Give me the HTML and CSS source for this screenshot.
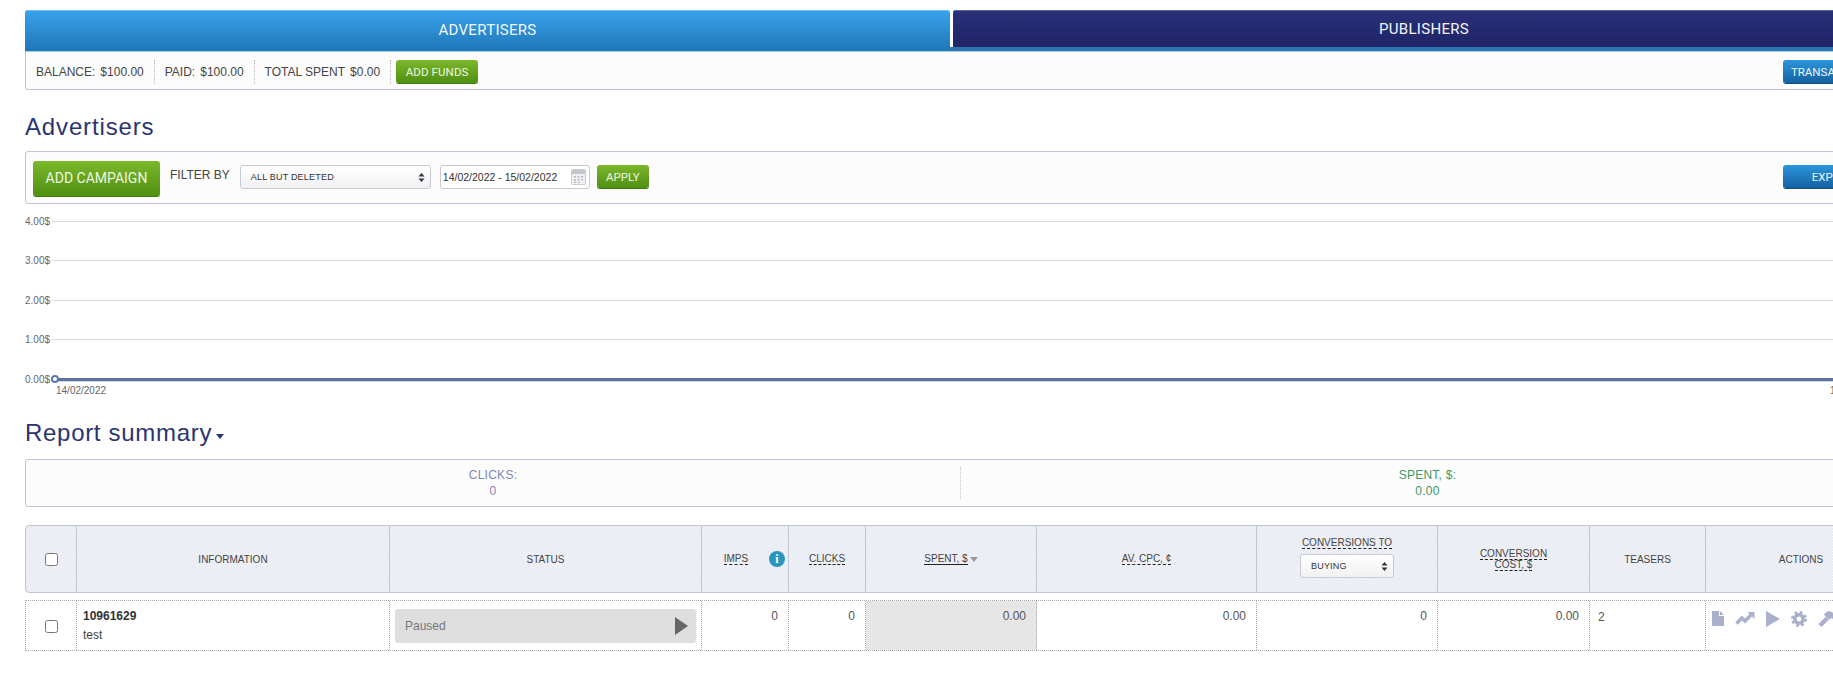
FILE: index.html
```html
<!DOCTYPE html>
<html lang="en">
<head>
<meta charset="utf-8">
<title>Advertisers</title>
<link rel="stylesheet" href="styles.css">
</head>
<body>
<div class="page">
  <nav class="tabs">
    <a class="tab tab-adv">ADVERTISERS</a>
    <a class="tab tab-pub">PUBLISHERS</a>
  </nav>
  <div class="box balance-bar">
    <span class="stat">BALANCE: <i>$100.00</i></span>
    <span class="stat">PAID: <i>$100.00</i></span>
    <span class="stat">TOTAL SPENT <i>$0.00</i></span>
    <button class="btn btn-green btn-small">ADD FUNDS</button>
    <button class="btn btn-blue btn-right">TRANSACTIONS</button>
  </div>

  <h1 class="title">Advertisers</h1>
  <div class="box filter-bar">
    <button class="btn btn-green btn-large">ADD CAMPAIGN</button>
    <span class="filter-label">FILTER BY</span>
    <div class="select select-filter">
      <span>ALL BUT DELETED</span>
      <svg class="updown" width="7" height="11" viewBox="0 0 7 11"><path d="M3.5 1 6.5 4.500H.5zM3.500 10 .5 6.500h6z"/></svg>
    </div>
    <div class="date">
      <span>14/02/2022 - 15/02/2022</span>
      <svg width="15" height="17" viewBox="0 0 15 17"><rect x=".5" y="1.500" width="14" height="15" rx="1" fill="#eef0f2" stroke="#c9ccd2"/><rect x="1" y="2" width="13" height="4" fill="#c4c7cd"/><path d="M3 8h2v1.500H3zm3.500 0h2v1.500h-2zm3.500 0h2v1.500h-2zM3 11h2v1.500H3zm3.500 0h2v1.500h-2zm3.500 0h2v1.500h-2zM3 13.800h2v1.200H3zm3.500 0h2v1.200h-2z" fill="#b4b8c0"/></svg>
    </div>
    <button class="btn btn-green btn-apply">APPLY</button>
    <button class="btn btn-blue btn-right btn-export">EXPORT</button>
  </div>

  <svg class="chart" width="1870" height="215" viewBox="0 0 1870 215">
    <g class="grid">
      <path d="M27 17.500H1870M27 56.500H1870M27 96.500H1870M27 135.500H1870"/>
    </g>
    <g class="axis">
      <text x="0" y="21">4.00$</text>
      <text x="0" y="60">3.00$</text>
      <text x="0" y="100">2.00$</text>
      <text x="0" y="139">1.00$</text>
      <text x="0" y="179">0.00$</text>
      <text x="31" y="190">14/02/2022</text>
      <text x="1805" y="190">15/02/2022</text>
    </g>
    <path class="line-shadow" d="M30 177H1870"/>
    <path class="line" d="M30 175.500H1870"/>
    <circle class="dot" cx="30" cy="175" r="3"/>
  </svg>

  <h2 class="title title-report">Report summary<span class="caret"></span></h2>
  <div class="box summary">
    <div class="summary-cell clicks">CLICKS:<br>0</div>
    <div class="summary-cell spent">SPENT, $:<br>0.00</div>
  </div>

  <div class="t-row t-head">
    <div class="th"><input type="checkbox"></div>
    <div class="th">INFORMATION</div>
    <div class="th">STATUS</div>
    <div class="th th-imps"><u class="dash">IMPS</u><span class="info">i</span></div>
    <div class="th"><u class="dash">CLICKS</u></div>
    <div class="th"><u class="solid">SPENT, $</u><span class="sort"></span></div>
    <div class="th"><u class="dash">AV. CPC, ¢</u></div>
    <div class="th th-conv">
      <u class="dash">CONVERSIONS TO</u>
      <div class="select select-conv">
        <span>BUYING</span>
        <svg class="updown" width="7" height="11" viewBox="0 0 7 11"><path d="M3.5 1 6.5 4.500H.5zM3.500 10 .5 6.500h6z"/></svg>
      </div>
    </div>
    <div class="th th-cost"><u class="dash">CONVERSION</u><u class="dash">COST, $</u></div>
    <div class="th">TEASERS</div>
    <div class="th">ACTIONS</div>
  </div>

  <div class="t-row t-body">
    <div class="td td-check"><input type="checkbox"></div>
    <div class="td td-info"><b>10961629</b><span>test</span></div>
    <div class="td td-status">
      <div class="status-pill"><span>Paused</span><svg width="13" height="18" viewBox="0 0 13 18"><path d="M0 0 13 9 0 18z"/></svg></div>
    </div>
    <div class="td num">0</div>
    <div class="td num">0</div>
    <div class="td num sorted">0.00</div>
    <div class="td num">0.00</div>
    <div class="td num">0</div>
    <div class="td num">0.00</div>
    <div class="td td-teasers">2</div>
    <div class="td td-actions">
      <svg width="12" height="15" viewBox="0 0 12 15"><path d="M0 0H7V5H12V15H0zM8 0 12 4H8z"/></svg>
      <svg width="20" height="14" viewBox="0 0 20 14"><path class="trend" d="M1.500 12.500 7 7l3 3 6-6"/><path d="M12.500 1H19.500V8z"/></svg>
      <svg width="14" height="16" viewBox="0 0 14 16"><path d="M0 0 14 8 0 16z"/></svg>
      <svg width="16" height="16" viewBox="0 0 16 16"><circle class="gear-ring" cx="8" cy="8" r="4.200"/><circle class="gear-teeth" cx="8" cy="8" r="6.500"/></svg>
      <svg width="18" height="16" viewBox="0 0 18 16"><path d="M.5 13l7-7 3 3-7 7zM6 3 10 0l4 1 4 4-3 3-2-1-2 2-4-4z"/></svg>
    </div>
  </div>
</div>
</body>
</html>
```
FILE: styles.css
```css
html, body { overflow-x: hidden; }
body {
  margin: 0;
  padding: 10px 0 0 25px;
  font-family: "Liberation Sans", Arial, sans-serif;
  font-size: 12px;
  color: #333;
  background: #fff;
}
.page { width: 1870px; }

/* tabs */
.tabs {
  display: flex;
  gap: 3px;
  height: 41px;
  border-bottom: 1px solid #9fd3ec;
  background: linear-gradient(to bottom, #fff 37px, #2e72ae 37px);
}
.tab {
  display: flex;
  align-items: center;
  justify-content: center;
  font-family: Roboto, sans-serif;
  font-size: 15px;
  letter-spacing: .3px;
  color: #f2f6fb;
  border-radius: 3px 3px 0 0;
}
.tab-adv {
  width: 925px;
  padding-bottom: 2px;
  box-sizing: border-box;
  background: linear-gradient(to bottom, #38a3ec, #2076b6);
  box-shadow: inset 0 1px 0 #6fc0f0;
}
.tab-pub {
  flex: 1;
  height: 37px;
  background: linear-gradient(to bottom, #2a3079, #1f2466);
  box-shadow: inset 0 1px 0 #5a62a0;
}

/* boxes */
.box {
  box-sizing: border-box;
  border: 1px solid #bfc5d4;
  border-radius: 3px;
  background: #fcfcfd;
}
.balance-bar {
  display: flex;
  align-items: center;
  height: 38px;
  padding: 2px 11px 0 10px;
  border-top: 0;
  border-radius: 0 0 3px 3px;
}
.stat {
  display: flex;
  align-items: center;
  gap: 5px;
  height: 24px;
  padding-right: 10px;
  margin-right: 10px;
  border-right: 1px dotted #b8b8b8;
  color: #444;
}
.stat i { font-style: normal; }
.stat:nth-child(3) { margin-right: 5px; padding-right: 10px; }

/* buttons */
.btn {
  border: 0;
  border-radius: 3px;
  color: #eef6e2;
  font-family: Roboto, sans-serif;
  padding: 0;
  text-align: center;
}
.btn-green {
  background: linear-gradient(to bottom, #7cb82b, #4f8f12);
  box-shadow: 0 1px 0 #3f7a0c;
}
.btn-blue {
  background: linear-gradient(to bottom, #2c96dd, #14609f);
  box-shadow: 0 1px 0 #0f4f86;
  color: #eaf4fb;
}
.btn-small { width: 82px; height: 23px; font-size: 11.500px; letter-spacing: .1px; }
.btn-right { width: 100px; height: 23px; margin-left: auto; font-size: 11.500px; }
.btn-large { width: 127px; height: 35px; margin-top: 3px; font-size: 14px; }
.btn-apply { width: 52px; height: 23px; font-size: 11.500px; margin-left: 7px; }
.btn-export { height: 23px; }

/* title */
.title {
  margin: 23px 0 10px;
  font-weight: 400;
  font-size: 24px;
  line-height: 28px;
  letter-spacing: .85px;
  color: #2b3470;
}
.title-report { margin: 0 0 12px; letter-spacing: .7px; }
.caret {
  display: inline-block;
  margin-left: 4px;
  vertical-align: 2px;
  border-left: 4px solid transparent;
  border-right: 4px solid transparent;
  border-top: 5px solid #2b3470;
}

/* filter */
.filter-bar {
  display: flex;
  align-items: center;
  height: 53px;
  padding: 0 11px 2px 7px;
}
.filter-label { margin: 0 10px; padding-bottom: 3px; color: #444; }
.select {
  position: relative;
  display: flex;
  align-items: center;
  box-sizing: border-box;
  height: 24px;
  border: 1px solid #c6cad3;
  border-radius: 3px;
  background: linear-gradient(to bottom, #fff, #f1f1f3);
  font-size: 9px;
  letter-spacing: .2px;
  color: #333;
  font-family: "Liberation Sans", Arial, sans-serif;
}
.select-filter { width: 191px; padding-left: 10px; }
.select-conv { width: 94px; padding-left: 10px; text-decoration: none; }
.updown { position: absolute; right: 5px; top: 6px; fill: #333; }
.date {
  display: flex;
  align-items: center;
  justify-content: space-between;
  box-sizing: border-box;
  width: 150px;
  height: 24px;
  margin-left: 9px;
  padding: 0 3px 0 2px;
  border: 1px solid #c6cad3;
  border-radius: 3px;
  background: #fff;
  font-size: 10.500px;
}

/* chart */
.chart { display: block; overflow: visible; }
.grid path { stroke: #d8dadf; stroke-width: 1; fill: none; }
.axis text { font-size: 10px; fill: #666; font-family: "Liberation Sans", Arial, sans-serif; }
.line { stroke: #5f6fa6; stroke-width: 3; fill: none; }
.line-shadow { stroke: #d5d7de; stroke-width: 2; fill: none; }
.dot { fill: #fff; stroke: #5f7aa8; stroke-width: 2; }

/* summary */
.summary {
  display: grid;
  grid-template-columns: 934px 1fr;
  align-items: center;
  height: 48px;
  margin-bottom: 18px;
  padding: 6px 0;
}
.summary-cell { text-align: center; line-height: 16px; letter-spacing: .25px; }
.clicks { color: #7c87b5; }
.spent { color: #3b9a68; border-left: 1px dotted #c6c6c6; }

/* table */
.t-row {
  display: grid;
  grid-template-columns: 51px 313px 312px 87px 77px 171px 220px 181px 152px 116px 190px;
}
.t-head {
  box-sizing: border-box;
  height: 68px;
  border: 1px solid #bfc5d4;
  border-radius: 4px;
  background: repeating-linear-gradient(135deg, #e8eaf3 0, #e8eaf3 1.060px, #f5f6fa 1.060px, #f5f6fa 2.121px);
  margin-bottom: 7px;
}
.th {
  display: flex;
  align-items: center;
  justify-content: center;
  font-size: 10px;
  color: #444;
  border-right: 1px solid #bfc5d4;
  text-align: center;
}
.th:last-child { border-right: 0; }
.th:first-child { margin-left: -1px; padding-left: 1px; }
.th u { text-decoration: none; padding-bottom: 0; }
.dash { border-bottom: 1px dashed #222; line-height: 10px; }
.solid { border-bottom: 1px solid #222; line-height: 10px; }
.th-imps { position: relative; padding-right: 18px; box-sizing: border-box; }
.info {
  position: absolute;
  right: 3px;
  top: 25px;
  width: 16px;
  height: 16px;
  border-radius: 50%;
  background: #2b95bd;
  color: #fff;
  font: 700 12px/16px "Liberation Serif", serif;
}
.sort {
  margin-left: 2px;
  border-left: 4.500px solid transparent;
  border-right: 4.500px solid transparent;
  border-top: 5px solid #9a9a9a;
}
.th-conv { flex-direction: column; gap: 5px; padding-bottom: 2px; box-sizing: border-box; }
.th-cost { flex-direction: column; line-height: 12px; padding-top: 2px; box-sizing: border-box; }

.t-body {
  height: 51px;
  box-sizing: border-box;
  border-top: 1px dotted #aaa;
  border-bottom: 1px dotted #aaa;
  border-left: 1px dotted #aaa;
}
.td {
  box-sizing: border-box;
  border-right: 1px dotted #aaa;
  font-size: 12px;
  color: #555;
}
.td:first-child { margin-left: -1px; }
.td:last-child { border-right: 0; }
.td-check { display: flex; align-items: center; justify-content: center; padding: 2px 0 0 2px; }
.td-info {
  display: flex;
  flex-direction: column;
  gap: 5px;
  padding: 8px 0 0 6px;
  line-height: 14px;
  color: #444;
}
.td-info b { color: #333; }
.td-status { padding: 8px 5px 0 5px; }
.status-pill {
  display: flex;
  align-items: center;
  justify-content: space-between;
  height: 34px;
  padding: 0 8px 0 10px;
  border-radius: 3px;
  background: #dedede;
  color: #777;
}
.status-pill svg { fill: #666; }
.num { padding: 8px 10px 0 0; text-align: right; line-height: 14px; }
.sorted { background: #e6e6e6; }
.td-teasers { padding: 9px 0 0 8px; line-height: 14px; }
.td-actions {
  display: flex;
  align-items: flex-start;
  gap: 11px;
  padding: 10px 0 0 6px;
}
.td-actions svg { flex: none; fill: #aab0cc; }
.trend { fill: none; stroke: #aab0cc; stroke-width: 3.500; }
.gear-ring { fill: none; stroke: #aab0cc; stroke-width: 3.500; }
.gear-teeth { fill: none; stroke: #aab0cc; stroke-width: 3; stroke-dasharray: 2.600 2.500; }
input[type="checkbox"] { margin: 0; }
```
